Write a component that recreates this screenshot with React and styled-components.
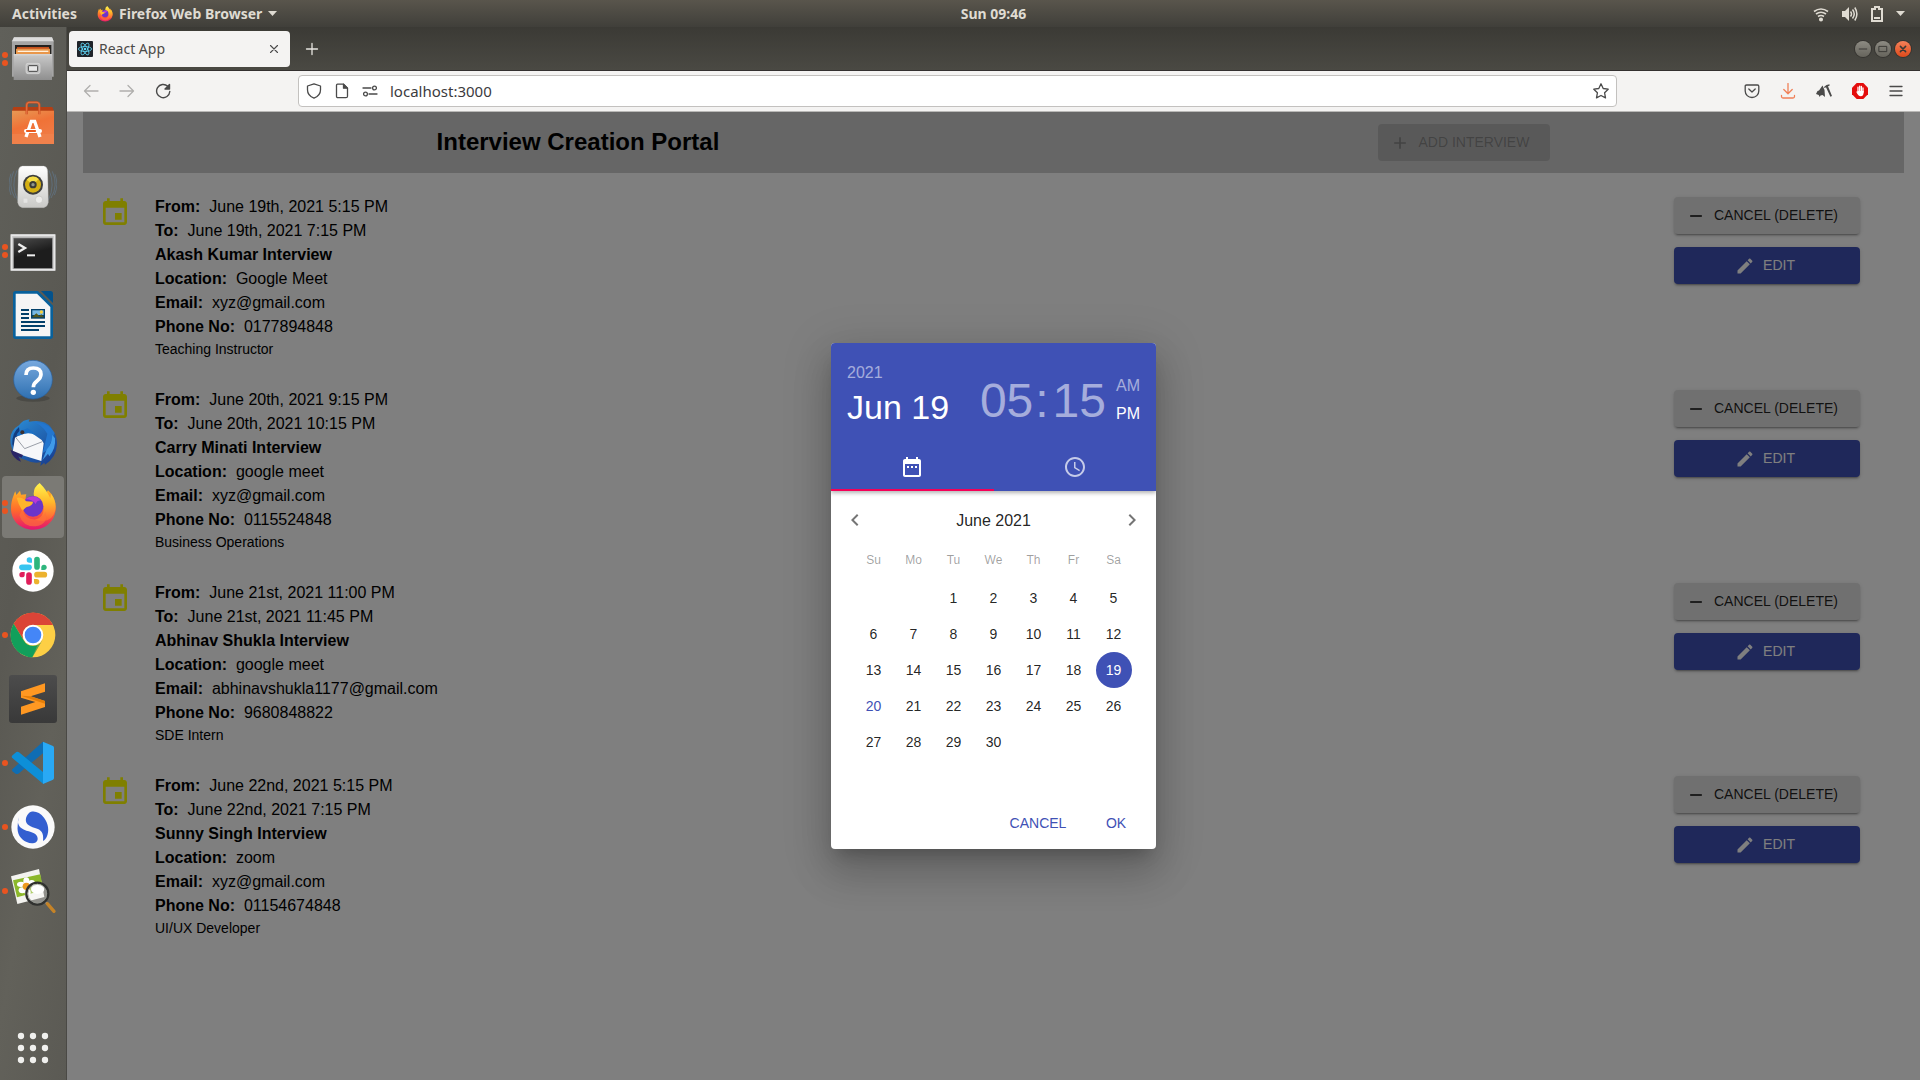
import React from "react";
import styled, { createGlobalStyle } from "styled-components";

const GlobalStyle = createGlobalStyle`
  *, *::before, *::after { box-sizing: border-box; }
  body { margin: 0; font-family: "Liberation Sans", Arial, sans-serif; }
  button, input { font: inherit; margin: 0; }
  h1, h2, p, ul { margin: 0; padding: 0; }
  svg { display: block; flex: none; }
`;

const uiFont = `"Noto Sans", "Open Sans", sans-serif`;

/* ---------- desktop shell ---------- */

const Desktop = styled.div`
  display: flex;
  flex-direction: column;
  min-height: 100vh;
  background: #5d5c56;
`;

const SystemBar = styled.header`
  display: grid;
  grid-template-columns: 70px 1fr auto 1fr;
  align-items: center;
  height: 27px;
  padding: 0 15px 0 12px;
  background: linear-gradient(#59554c, #403f3a);
  color: #dfdbd2;
  font: 700 14px/26px ${uiFont};
`;

const BarGroup = styled.div`
  display: flex;
  align-items: center;
  grid-column: ${(p) => (p.$end ? "4" : "1 / 3")};
  justify-content: ${(p) => (p.$end ? "flex-end" : "flex-start")};
  gap: ${(p) => p.$gap}px;
`;

const BarButton = styled.button`
  display: flex;
  align-items: center;
  gap: 6px;
  padding: 0;
  border: 0;
  background: none;
  color: inherit;
  white-space: nowrap;
`;

const Workspace = styled.div`
  display: flex;
  flex: 1;
`;

const DockBar = styled.nav`
  display: flex;
  flex-direction: column;
  width: 67px;
  flex: none;
  background: linear-gradient(100deg, #60605a, #5a5953 45%, #62615a 70%, #5b5a54);
  border-right: 1px solid #4a4945;
`;

const DockCell = styled.button`
  display: flex;
  align-items: center;
  justify-content: center;
  position: relative;
  height: 62px;
  margin: 1px 2px;
  padding: 0;
  border: 0;
  border-radius: 4px;
  background: ${(p) => (p.$active ? "#7b7a75" : "none")};
  ${(p) => p.$last && "margin-top: auto;"}
`;

const Running = styled.span`
  position: absolute;
  left: 0;
  top: 0;
  bottom: 0;
  display: flex;
  flex-direction: column;
  justify-content: center;
  gap: 2px;
`;

const Dot = styled.i`
  width: 6px;
  height: 6px;
  border-radius: 50%;
  background: #e95420;
`;

/* ---------- browser ---------- */

const BrowserWindow = styled.main`
  display: flex;
  flex-direction: column;
  flex: 1;
  min-width: 0;
`;

const TabStrip = styled.div`
  display: flex;
  align-items: center;
  height: 44px;
  padding: 0 9px 0 2px;
  background: linear-gradient(#3b3a35, #4a4943);
  border-bottom: 1px solid #33302f;
`;

const Tab = styled.div`
  display: flex;
  align-items: center;
  gap: 6px;
  width: 221px;
  height: 36px;
  padding: 0 8px;
  border-radius: 4px;
  background: #f4f3f2;
  color: #4b4a48;
  font: 14px/36px ${uiFont};
`;

const IconButton = styled.button`
  display: flex;
  align-items: center;
  justify-content: center;
  width: ${(p) => p.$size || 36}px;
  height: ${(p) => p.$size || 36}px;
  padding: 0;
  border: 0;
  background: none;
  color: ${(p) => p.$color || "#4a4a4a"};
`;

const TabTitle = styled.span`
  flex: 1;
`;

const WindowControls = styled.div`
  display: flex;
  gap: 4px;
  margin-left: auto;
`;

const WindowButton = styled.button`
  display: flex;
  align-items: center;
  justify-content: center;
  width: 16px;
  height: 16px;
  padding: 0;
  border: 0;
  border-radius: 50%;
  color: #3a3935;
  background: ${(p) => (p.$close ? "linear-gradient(#f58159, #de4a1b)" : "linear-gradient(#8d8b83, #66645c)")};
  box-shadow: 0 0 0 1px rgba(40, 38, 35, 0.5);
`;

const NavBar = styled.div`
  display: flex;
  align-items: center;
  height: 41px;
  padding: 0 6px;
  background: #f4f3f2;
  border-bottom: 1px solid #b9b8b6;
`;

const NavGroup = styled.div`
  display: flex;
  flex: 0 1 ${(p) => p.$basis}px;
  justify-content: ${(p) => (p.$end ? "flex-end" : "flex-start")};
`;

const AddressBar = styled.label`
  display: flex;
  align-items: center;
  flex: 1;
  gap: 12px;
  height: 32px;
  padding: 0 7px;
  border: 1px solid #c3c1bf;
  border-radius: 4px;
  background: #fff;
  color: #4a4a4a;
`;

const AddressInput = styled.input`
  flex: 1;
  min-width: 0;
  padding: 0;
  border: 0;
  outline: 0;
  background: none;
  color: #3b3b40;
  font: 15px/28px ${uiFont};
`;

/* ---------- portal page ---------- */

const Viewport = styled.div`
  position: relative;
  flex: 1;
  background: #fff;
`;

const Portal = styled.div`
  margin: 0 16px;
`;

const PortalHeader = styled.header`
  display: flex;
  align-items: flex-start;
  justify-content: space-around;
  padding: 12px 24px;
  background: #ccc;
`;

const PortalTitle = styled.h1`
  font-size: 24px;
  line-height: 35px;
`;

const buttonLook = {
  plain: "background: #e0e0e0; color: rgba(0,0,0,.87);",
  primary: "background: #3f51b5; color: #fff; justify-content: center;",
  disabled: "background: rgba(0,0,0,.12); color: rgba(0,0,0,.26);",
};

const Contained = styled.button`
  display: flex;
  align-items: center;
  gap: 8px;
  min-width: ${(p) => p.$width}px;
  padding: 6px 16px 6px 12px;
  border: 0;
  border-radius: 4px;
  font-size: 14px;
  line-height: 25px;
  text-transform: uppercase;
  box-shadow: ${(p) =>
    p.disabled ? "none" : "0 3px 1px -2px rgba(0,0,0,.2), 0 2px 2px rgba(0,0,0,.14), 0 1px 5px rgba(0,0,0,.12)"};
  ${(p) => buttonLook[p.$look]}
`;

const InterviewList = styled.ul`
  display: flex;
  flex-direction: column;
  gap: 29px;
  padding: 22px 44px 22px 16px;
  list-style: none;
`;

const InterviewRow = styled.li`
  display: flex;
`;

const RowIcon = styled.div`
  width: 56px;
  padding-top: 2px;
  color: #ff0;
`;

const Details = styled.div`
  flex: 1;
  font-size: 16px;
  line-height: 24px;
`;

const Role = styled.p`
  font-size: 14px;
  line-height: 20px;
`;

const RowActions = styled.div`
  display: flex;
  flex-direction: column;
  gap: 13px;
  padding-top: 2px;
`;

/* ---------- date and time picker ---------- */

const Backdrop = styled.div`
  position: absolute;
  inset: 0;
  display: flex;
  align-items: center;
  justify-content: center;
  background: rgba(0, 0, 0, 0.5);
`;

const Picker = styled.section`
  width: 325px;
  overflow: hidden;
  border-radius: 4px;
  background: #fff;
  color: rgba(0, 0, 0, 0.87);
  box-shadow: 0 11px 15px -7px rgba(0, 0, 0, 0.2), 0 24px 38px 3px rgba(0, 0, 0, 0.14),
    0 9px 46px 8px rgba(0, 0, 0, 0.12);
`;

const PickerTop = styled.div`
  background: #3f51b5;
  box-shadow: 0 2px 4px rgba(0, 0, 0, 0.3);
`;

const Readout = styled.div`
  display: flex;
  align-items: flex-end;
  justify-content: space-between;
  padding: 16px;
`;

const Stack = styled.div`
  display: flex;
  flex-direction: column;
  align-items: flex-start;
`;

const TimeParts = styled.div`
  display: flex;
  align-items: flex-end;
`;

const ReadoutButton = styled.button`
  padding: 0;
  border: 0;
  background: none;
  color: ${(p) => (p.$on ? "#fff" : "rgba(255,255,255,.54)")};
  font-size: ${(p) => p.$size}px;
  line-height: ${(p) => p.$line}px;
`;

const Colon = styled.span`
  margin: 0 4px 0 2px;
  color: rgba(255, 255, 255, 0.54);
  font-size: 48px;
  line-height: 52px;
`;

const Meridiem = styled(Stack)`
  gap: 2px;
  margin-left: 10px;
`;

const PickerTabs = styled.div`
  display: grid;
  grid-template-columns: 1fr 1fr;
`;

const PickerTab = styled.button`
  display: flex;
  align-items: center;
  justify-content: center;
  height: 48px;
  padding: 2px 0 0;
  border: 0;
  border-bottom: 2px solid ${(p) => (p.$on ? "#f50057" : "transparent")};
  background: none;
  color: ${(p) => (p.$on ? "#fff" : "rgba(255,255,255,.7)")};
`;

const Calendar = styled.div`
  min-height: 306px;
`;

const MonthRow = styled.div`
  display: flex;
  align-items: center;
  justify-content: space-between;
  padding-top: 5px;
  margin-bottom: 8px;
`;

const MonthName = styled.h2`
  font-size: 16px;
  font-weight: 400;
  line-height: 22px;
  padding-top: 2px;
`;

const DayGrid = styled.div`
  display: grid;
  grid-template-columns: repeat(7, 40px);
  justify-content: center;
  justify-items: center;
`;

const Weekday = styled.span`
  margin-bottom: 12px;
  color: rgba(0, 0, 0, 0.38);
  font-size: 12px;
  line-height: 16px;
`;

const Day = styled.button`
  width: 36px;
  height: 36px;
  padding: 0;
  border: 0;
  border-radius: 50%;
  background: ${(p) => (p.$selected ? "#3f51b5" : "none")};
  color: ${(p) => (p.$selected ? "#fff" : p.$today ? "#3f51b5" : "rgba(0,0,0,.87)")};
  font-size: 14px;
`;

const PickerActions = styled.div`
  display: flex;
  justify-content: flex-end;
  gap: 8px;
  padding: 8px;
`;

const TextButton = styled.button`
  min-width: ${(p) => p.$width}px;
  height: 36px;
  padding: 0 8px;
  border: 0;
  background: none;
  color: #3f51b5;
  font-size: 14px;
`;

/* ---------- icons ---------- */

const Glyph = ({ size = 24, d, label }) => (
  <svg width={size} height={size} viewBox="0 0 24 24" fill="currentColor" aria-hidden={!label}>
    <path d={d} />
  </svg>
);

const Line = ({ size = 16, children, w = 1.3 }) => (
  <svg width={size} height={size} viewBox="0 0 16 16" fill="none" stroke="currentColor" strokeWidth={w} strokeLinecap="round" strokeLinejoin="round">
    {children}
  </svg>
);

const paths = {
  event: "M17 12h-5v5h5v-5zM16 1v2H8V1H6v2H5c-1.11 0-1.99.9-1.99 2L3 19c0 1.1.89 2 2 2h14c1.1 0 2-.9 2-2V5c0-1.1-.9-2-2-2h-1V1h-2zm3 18H5V8h14v11z",
  add: "M19 13h-6v6h-2v-6H5v-2h6V5h2v6h6v2z",
  remove: "M19 13H5v-2h14v2z",
  edit: "M3 17.25V21h3.75L17.81 9.94l-3.75-3.75L3 17.25zM20.71 7.04c.39-.39.39-1.02 0-1.41l-2.34-2.34c-.39-.39-1.02-.39-1.41 0l-1.83 1.83 3.75 3.75 1.83-1.83z",
  range: "M9 11H7v2h2v-2zm4 0h-2v2h2v-2zm4 0h-2v2h2v-2zm2-7h-1V2h-2v2H8V2H6v2H5c-1.11 0-1.99.9-1.99 2L3 20c0 1.1.89 2 2 2h14c1.1 0 2-.9 2-2V6c0-1.1-.9-2-2-2zm0 16H5V9h14v11z",
  clock: "M11.99 2C6.47 2 2 6.48 2 12s4.47 10 9.99 10C17.52 22 22 17.52 22 12S17.52 2 11.99 2zM12 20c-4.42 0-8-3.58-8-8s3.58-8 8-8 8 3.58 8 8-3.58 8-8 8zm.5-13H11v6l5.25 3.15.75-1.23-4.5-2.67z",
  left: "M15.41 16.59L10.83 12l4.58-4.59L14 6l-6 6 6 6 1.41-1.41z",
  right: "M8.59 16.59L13.17 12 8.59 7.41 10 6l6 6-6 6-1.41-1.41z",
};

const App48 = ({ size = 48, children }) => (
  <svg width={size} height={size} viewBox="0 0 144 144" aria-hidden="true">
    {children}
  </svg>
);

const Gradient = ({ id, from, to, mid, x2 = 0, y2 = 1 }) => (
  <linearGradient id={id} x1="0" y1="0" x2={x2} y2={y2}>
    <stop offset="0" stopColor={from} />
    {mid && <stop offset=".5" stopColor={mid} />}
    <stop offset="1" stopColor={to} />
  </linearGradient>
);

const FilesIcon = () => (
  <App48>
    <Gradient id="fi" from="#c9c9c9" to="#8f8f8f" />
    <path d="M15 7h114l5 12v106H9V19z" fill="#a5a5a5" />
    <path d="M15 7h114l5 12H9z" fill="#dcdcdc" />
    <path d="M18 30h109v28H18z" fill="#24221f" />
    <path d="M24 36h96v20H24z" fill="#c4501c" />
    <path d="M21 41h102v17H21z" fill="#e9974b" />
    <path d="M26 47h92v4H26z" fill="#fff1dc" />
    <path d="M14 58h115v77H14z" fill="url(#fi)" />
    <path d="M14 58h115v3H14z" fill="#ddd" />
    <rect x="51" y="85" width="42" height="31" rx="6" fill="#c4c4c4" stroke="#ddd" strokeWidth="2" />
    <rect x="58" y="92" width="28" height="17" rx="2" fill="#e8e8e8" stroke="#444" strokeWidth="3" />
  </App48>
);

const SoftwareIcon = () => (
  <App48>
    <Gradient id="so" from="#e79a55" mid="#f07237" to="#f07c46" x2={0.4} />
    <path d="M13 24h117l5 12H9z" fill="#b53f14" />
    <path d="M9 35h126v100H9z" fill="url(#so)" />
    <path d="M9 105h126v30H9z" fill="#f08650" opacity=".6" />
    <path d="M53 46V18q0-7 7-8h24q7 1 7 8v28" fill="none" stroke="#cf5322" strokeWidth="7" />
    <path d="M53 46V18q0-7 7-8h24q7 1 7 8v28" fill="none" stroke="#ee8253" strokeWidth="2" />
    <path d="m51 114 16-47h10l16 47" fill="none" stroke="#fff" strokeWidth="10" />
    <rect x="45" y="90" width="54" height="12" rx="6" fill="#fff" />
    <rect x="51" y="93" width="30" height="6" rx="2" fill="#e95a1f" />
  </App48>
);

const RhythmIcon = () => (
  <App48>
    <Gradient id="rh" from="#fff" to="#c9c9c6" />
    <g fill="none" stroke="#6485a6" strokeWidth="3" opacity=".45">
      <path d="M24 22Q4 65 26 112M14 25Q-5 68 18 105M6 32Q-6 65 6 96M120 22q20 43-2 90M130 25q19 43-4 80M138 34q12 32-2 62" />
    </g>
    <path d="M40 9h64q11 2 12 15l2 94q-2 14-14 16H40q-12-2-14-16l2-94Q29 11 40 9z" fill="url(#rh)" stroke="#aaa" strokeWidth="1" />
    <circle cx="72" cy="65" r="30" fill="#3d3e3d" />
    <circle cx="72" cy="65" r="24" fill="#d4af13" />
    <path d="M53 50a24 24 0 0 1 36-2L72 65z" fill="#f4dc47" />
    <circle cx="72" cy="65" r="11" fill="#3a3a37" />
    <circle cx="72" cy="65" r="5" fill="#91968b" />
    <circle cx="90" cy="110" r="11" fill="#ececea" stroke="#c2c2c0" strokeWidth="2" />
    <rect x="43" y="106" width="13" height="14" rx="3" fill="#e4e4e2" stroke="#ccc" />
  </App48>
);

const TerminalIcon = () => (
  <App48>
    <Gradient id="te" from="#4c4c4c" to="#1d1d1d" y2={0.6} x2={0.2} />
    <rect x="4" y="21" width="136" height="111" rx="3" fill="#c9c9c9" />
    <rect x="8" y="25" width="128" height="103" fill="none" stroke="#eee" strokeWidth="3" />
    <rect x="14" y="33" width="116" height="91" fill="url(#te)" stroke="#8b8b8b" strokeWidth="2" />
    <path d="m28 51 20 12-20 12" fill="none" stroke="#eee" strokeWidth="7" />
    <path d="M54 85h24" stroke="#eee" strokeWidth="6" />
  </App48>
);

const WriterIcon = () => (
  <App48>
    <path d="M20 0h67l45 44v92q0 8-8 8H20q-8 0-8-8V8q0-8 8-8z" fill="#08619c" />
    <path d="M96 0h28q8 0 8 8v28z" fill="#03528c" />
    <path d="M20 8h64l40 40v88H20z" fill="#f5f5f5" />
    <path d="M36 57h24M36 69h24M36 81h24M36 93h72M36 105h72M36 117h54" stroke="#02406a" strokeWidth="6" />
    <rect x="66" y="54" width="42" height="29" fill="#02406a" />
    <path d="M70 58h34v14H70z" fill="#77b8e4" />
    <circle cx="97" cy="63" r="5" fill="#f8d23b" />
    <path d="m69 79 13-12 9 8 6-5 8 9z" fill="#52551c" />
  </App48>
);

const HelpIcon = () => (
  <App48>
    <Gradient id="he" from="#78a9de" to="#2e70b1" />
    <ellipse cx="72" cy="130" rx="50" ry="10" fill="#3a3a36" opacity=".5" />
    <circle cx="72" cy="74" r="58" fill="url(#he)" stroke="#2761a0" strokeWidth="2" />
    <path d="M51 60q0-21 22-21 23 0 23 19 0 11-12 20-11 8-11 19" fill="none" stroke="#fff" strokeWidth="11" />
    <circle cx="73" cy="112" r="8" fill="#fff" />
  </App48>
);

const ThunderbirdIcon = () => (
  <App48>
    <Gradient id="th" from="#2b8fd8" to="#194293" x2={0.7} />
    <path d="M30 19Q40 3 62 1q-4 5-2 7 45-9 66 17l4 10q15 13 14 44-3 38-36 58l-2-6-12 10 2-12q-22 6-46-6-36-8-43-40Q-5 38 30 19z" fill="url(#th)" />
    <path d="M30 24q-22 18-20 52l14 28q-4-40 8-64z" fill="#123c7e" />
    <path d="M62 9q30-2 53 35l-14 58 14-8 22-52Q118 6 62 9z" fill="#2376cf" />
    <path d="M18 56 28 50q20-12 40-8l30 21 6 10-7 53L11 100z" fill="#f6f7f9" />
    <path d="m19 54 28 35 53-21" fill="none" stroke="#9a9fa8" strokeWidth="3" />
    <path d="M113 92q16-18 17-44l8 10q3 30-17 54l-4-8-17 20z" fill="#3f9ae8" />
    <path d="M22 50q5-17 22-18l12-4q14 7 24 20-24-12-50 2z" fill="#1b70c5" />
    <circle cx="40" cy="40" r="6" fill="#3a3030" />
    <path d="m4 92 38 16-4 8-10-4 8 16Q12 120 4 92z" fill="#2a2466" />
  </App48>
);

const FirefoxIcon = ({ size }) => (
  <App48 size={size}>
    <Gradient id="ff" from="#ffb525" mid="#ff6a2c" to="#e4156f" />
    <Gradient id="fy" from="#fff44f" mid="#ffb92a" to="#ff5d38" />
    <path d="M14 37q2-8 5-12l3 11 11-13 3 12 16-1q-4 12 0 19l45-3 20-28q23 20 23 53c0 38-30 65-67 65S6 114 6 77c0-17 3-27 8-40z" fill="url(#ff)" />
    <path d="M92 0q-18 12-18 32 0 10 10 17 20 12 20 30 0 25-26 31 50 14 60-25 7-28-12-52l-2 13Q113 21 92 0z" fill="url(#fy)" />
    <circle cx="72" cy="70" r="31" fill="#6b35c9" />
    <path d="M49 49q25-20 47 4-12-2-16 10-8-14-31-14z" fill="#b938d5" />
    <path d="M23 44q17-3 29 11l20 1q0 11-19 16-6 3-12 12-12-16-18-40z" fill="#ffb52b" />
    <path d="M40 78q8 34 43 31 23-3 26-24 11 40-30 45-37 2-48-33z" fill="#ff7139" opacity=".65" />
  </App48>
);

const SlackIcon = () => (
  <App48>
    <circle cx="72" cy="72" r="62" fill="#fff" />
    <g strokeWidth="17" strokeLinecap="round">
      <path d="M39 61h21" stroke="#36c5f0" /><path d="M84 38v22" stroke="#2eb67d" />
      <path d="M84 83h22" stroke="#ecb22e" /><path d="M60 84v21" stroke="#e01e5a" />
    </g>
    <path d="M69 47V39a8 8 0 1 0-8 8z" fill="#36c5f0" />
    <path d="M97 69h8a8 8 0 1 0-8-8z" fill="#2eb67d" />
    <path d="M75 96v8a8 8 0 1 0 8-8z" fill="#ecb22e" />
    <path d="M47 75h-8a8 8 0 1 0 8 8z" fill="#e01e5a" />
  </App48>
);

const ChromeIcon = () => (
  <App48>
    <circle cx="72" cy="72" r="67" fill="#fdcf45" />
    <path d="M14 38a67 67 0 0 1 118 4H72a32 32 0 0 0-28 46z" fill="#db4437" />
    <path d="M14 38a67 67 0 0 0 56 101l30-51a32 32 0 0 1-56 0z" fill="#119f5b" />
    <path d="m70 139 30-51q6-12 2-24z" fill="#e9a933" opacity=".4" />
    <circle cx="72" cy="72" r="31" fill="#fff" />
    <circle cx="72" cy="72" r="25" fill="#4486f7" />
  </App48>
);

const SublimeIcon = () => (
  <App48>
    <Gradient id="su" from="#4c4c4c" to="#393939" />
    <rect width="144" height="144" rx="9" fill="url(#su)" />
    <path d="M36 49 108 25v25L65 64l43 14v18l-72 23V95l43-14-43-13z" fill="#ff9822" />
    <path d="m65 64 43 14v8L36 62z" fill="#e57e08" />
  </App48>
);

const CodeIcon = () => (
  <App48>
    <path d="m9 92 14 12q3 2 7-1l73-62V8z" fill="#0f6fb5" />
    <path d="M9 92 102 8v34L24 104q-3 2-6-1L10 97z" fill="#0f6db3" />
    <path d="M9 50 22 39q4-2 8 1l73 60v35L10 57q-3-3-1-7z" fill="#0d8fd8" />
    <path d="m102 8 30 13q3 2 3 6v89q0 4-3 6l-30 13z" fill="#29a9f5" />
  </App48>
);

const SimplenoteIcon = () => (
  <App48>
    <circle cx="72" cy="72" r="65" fill="#fafafa" />
    <path d="M60 30c12-9 32-3 45 14s17 40 8 58c-5 9-11 12-11 12 3-24-5-34-24-39-21-5-30-15-27-29 2-9 9-16 9-16z" fill="#335fd0" />
    <path d="M29 43c-6 18 0 33 23 40 20 5 34 9 34 24 0 14-18 17-33 10-18-8-30-25-27-49 1-11 3-25 3-25z" fill="#335fd0" />
  </App48>
);

const ViewerIcon = () => (
  <App48>
    <path d="m6 28 84-22 16 84-81 21z" fill="#f3f3ef" />
    <path d="m12 40 82-18 9 48-79 21z" fill="#8cb82b" />
    <g fill="#fff">
      <ellipse cx="52" cy="42" rx="9" ry="11" /><ellipse cx="36" cy="52" rx="12" ry="8" /><ellipse cx="40" cy="70" rx="11" ry="9" />
      <ellipse cx="56" cy="76" rx="9" ry="10" /><ellipse cx="68" cy="48" rx="10" ry="9" /><ellipse cx="86" cy="66" rx="20" ry="15" />
    </g>
    <circle cx="52" cy="58" r="11" fill="#ed9a1f" />
    <path d="m108 104 12 10" stroke="#999" strokeWidth="6" />
    <path d="m115 110 20 23" stroke="#c58327" strokeWidth="10" strokeLinecap="round" />
    <circle cx="85" cy="80" r="33" fill="#fff" fillOpacity=".3" stroke="#30312f" strokeWidth="7" />
    <circle cx="85" cy="80" r="28" fill="none" stroke="#92958f" strokeWidth="2" />
  </App48>
);

const GridIcon = () => (
  <App48>
    {[36, 72, 108].map((y) => [36, 72, 108].map((x) => <circle key={x + "-" + y} cx={x} cy={y} r="9.5" fill="#f0f0ee" />))}
  </App48>
);

const ReactMark = () => (
  <svg width="16" height="16" viewBox="0 0 16 16" fill="none" stroke="#61dafb">
    <rect width="16" height="16" rx="1" fill="#1f2329" stroke="none" />
    {[0, 60, 120].map((a) => (
      <ellipse key={a} cx="8" cy="8" rx="6.6" ry="2.5" strokeWidth=".8" transform={`rotate(${a} 8 8)`} />
    ))}
    <circle cx="8" cy="8" r="1.3" fill="#61dafb" stroke="none" />
  </svg>
);

const Caret = () => (
  <svg width="9" height="5" viewBox="0 0 9 5" fill="currentColor"><path d="M0 0h9L4.500 5z" /></svg>
);

/* ---------- content ---------- */

const dockItems = [
  ["Files", FilesIcon, 2],
  ["Ubuntu Software", SoftwareIcon, 0],
  ["Rhythmbox", RhythmIcon, 0],
  ["Terminal", TerminalIcon, 2],
  ["LibreOffice Writer", WriterIcon, 0],
  ["Help", HelpIcon, 0],
  ["Thunderbird", ThunderbirdIcon, 0],
  ["Firefox", FirefoxIcon, 2, true],
  ["Slack", SlackIcon, 0],
  ["Chrome", ChromeIcon, 1],
  ["Sublime Text", SublimeIcon, 0],
  ["Visual Studio Code", CodeIcon, 1],
  ["Simplenote", SimplenoteIcon, 1],
  ["Image Viewer", ViewerIcon, 1],
];

const interviews = [
  { from: "June 19th, 2021 5:15 PM", to: "June 19th, 2021 7:15 PM", name: "Akash Kumar", place: "Google Meet", email: "xyz@gmail.com", phone: "0177894848", role: "Teaching Instructor" },
  { from: "June 20th, 2021 9:15 PM", to: "June 20th, 2021 10:15 PM", name: "Carry Minati", place: "google meet", email: "xyz@gmail.com", phone: "0115524848", role: "Business Operations" },
  { from: "June 21st, 2021 11:00 PM", to: "June 21st, 2021 11:45 PM", name: "Abhinav Shukla", place: "google meet", email: "abhinavshukla1177@gmail.com", phone: "9680848822", role: "SDE Intern" },
  { from: "June 22nd, 2021 5:15 PM", to: "June 22nd, 2021 7:15 PM", name: "Sunny Singh", place: "zoom", email: "xyz@gmail.com", phone: "01154674848", role: "UI/UX Developer" },
];

const Field = ({ label, value }) => (
  <p>
    <b>{label}:{"\u00a0"}</b> {value}
  </p>
);

function Interview({ item }) {
  return (
    <InterviewRow>
      <RowIcon><Glyph size={32} d={paths.event} /></RowIcon>
      <Details>
        <Field label="From" value={item.from} />
        <Field label="To" value={item.to} />
        <p><b>{item.name} Interview</b></p>
        <Field label="Location" value={item.place} />
        <Field label="Email" value={item.email} />
        <Field label="Phone No" value={item.phone} />
        <Role>{item.role}</Role>
      </Details>
      <RowActions>
        <Contained $look="plain" $width={186}><Glyph size={20} d={paths.remove} />Cancel (Delete)</Contained>
        <Contained $look="primary" $width={186}><Glyph size={20} d={paths.edit} />Edit</Contained>
      </RowActions>
    </InterviewRow>
  );
}

function DateTimePicker() {
  return (
    <Picker role="dialog" aria-label="Choose date and time">
      <PickerTop>
        <Readout>
          <Stack>
            <ReadoutButton $size={16} $line={28}>2021</ReadoutButton>
            <ReadoutButton $size={34} $line={40} $on>Jun 19</ReadoutButton>
          </Stack>
          <TimeParts>
            <ReadoutButton $size={48} $line={52}>05</ReadoutButton>
            <Colon>:</Colon>
            <ReadoutButton $size={48} $line={52}>15</ReadoutButton>
            <Meridiem>
              <ReadoutButton $size={16} $line={26}>AM</ReadoutButton>
              <ReadoutButton $size={16} $line={26} $on>PM</ReadoutButton>
            </Meridiem>
          </TimeParts>
        </Readout>
        <PickerTabs>
          <PickerTab $on aria-label="Date"><Glyph d={paths.range} /></PickerTab>
          <PickerTab aria-label="Time"><Glyph d={paths.clock} /></PickerTab>
        </PickerTabs>
      </PickerTop>
      <Calendar>
        <MonthRow>
          <IconButton $size={48} $color="#757575" aria-label="Previous month"><Glyph d={paths.left} /></IconButton>
          <MonthName>June 2021</MonthName>
          <IconButton $size={48} $color="#757575" aria-label="Next month"><Glyph d={paths.right} /></IconButton>
        </MonthRow>
        <DayGrid>
          {["Su", "Mo", "Tu", "We", "Th", "Fr", "Sa"].map((d) => <Weekday key={d}>{d}</Weekday>)}
          <span /><span />
          {Array.from({ length: 30 }, (_, i) => (
            <Day key={i} $selected={i === 18} $today={i === 19}>{i + 1}</Day>
          ))}
        </DayGrid>
      </Calendar>
      <PickerActions>
        <TextButton $width={76}>CANCEL</TextButton>
        <TextButton $width={64}>OK</TextButton>
      </PickerActions>
    </Picker>
  );
}

export default function App() {
  return (
    <Desktop>
      <GlobalStyle />
      <SystemBar>
        <BarGroup $gap={20}>
          <BarButton>Activities</BarButton>
          <BarButton><FirefoxIcon size={16} />Firefox Web Browser<Caret /></BarButton>
        </BarGroup>
        <BarButton>Sun 09:46</BarButton>
        <BarGroup $gap={13} $end>
          <svg width="16" height="16" viewBox="0 0 16 16" fill="none" stroke="currentColor" strokeWidth="1.7">
            <path d="M1 5.500Q8 .5 15 5.500M3 8q5-3.500 10 0M5 10.500q3-2 6 0" /><circle cx="8" cy="13.500" r="1.200" fill="currentColor" />
          </svg>
          <svg width="16" height="16" viewBox="0 0 16 16" fill="none" stroke="currentColor" strokeWidth="1.500">
            <path d="M0 5h3l4-4v14l-4-4H0z" fill="currentColor" stroke="none" /><path d="M8.500 5.500q2 2.500 0 5M10.500 3.500q3.500 4.500 0 9M12.800 1.500q4.200 6.500 0 13" />
          </svg>
          <svg width="12" height="16" viewBox="0 0 12 16" fill="none" stroke="currentColor" strokeWidth="2">
            <path d="M1 3h3V1h4v2h3v12H1zM3 12h6" />
          </svg>
          <Caret />
        </BarGroup>
      </SystemBar>
      <Workspace>
        <DockBar aria-label="Dock">
          {dockItems.map(([name, Icon, count, active]) => (
            <DockCell key={name} aria-label={name} $active={active}>
              <Running>{Array.from({ length: count }, (_, i) => <Dot key={i} />)}</Running>
              <Icon />
            </DockCell>
          ))}
          <DockCell aria-label="Show applications" $last><GridIcon /></DockCell>
        </DockBar>
        <BrowserWindow>
          <TabStrip>
            <Tab>
              <ReactMark />
              <TabTitle>React App</TabTitle>
              <IconButton $size={16} aria-label="Close tab"><Line w={1.1}><path d="m4.500 4.500 7 7m0-7-7 7" /></Line></IconButton>
            </Tab>
            <IconButton $size={44} $color="#e8e6e1" aria-label="New tab"><Line><path d="M8 2.500v11M2.500 8h11" /></Line></IconButton>
            <WindowControls>
              <WindowButton aria-label="Minimise"><Line size={12}><path d="M3 8h10" /></Line></WindowButton>
              <WindowButton aria-label="Maximise"><Line size={12}><path d="M3 4.500h10v7H3z" /></Line></WindowButton>
              <WindowButton $close aria-label="Close"><Line size={12} w={2}><path d="m4.500 4.500 7 7m0-7-7 7" /></Line></WindowButton>
            </WindowControls>
          </TabStrip>
          <NavBar>
            <NavGroup $basis={225}>
              <IconButton $color="#b0afad" aria-label="Back"><Line><path d="M15 8H1.500m5.500-5.500L1.500 8 7 13.500" /></Line></IconButton>
              <IconButton $color="#b0afad" aria-label="Forward"><Line><path d="M1 8h13.500M9 2.500 14.500 8 9 13.500" /></Line></IconButton>
              <IconButton aria-label="Reload"><Line w={1.4}><path d="M14.800 8.500A6.600 6.600 0 1 1 12.800 3.300" /><path d="M14.500 1.500v4.500H10z" fill="currentColor" /></Line></IconButton>
            </NavGroup>
            <AddressBar>
              <Line><path d="M8 .8 14.500 3v4q0 5.500-6.500 8.200Q1.500 12.500 1.500 7V3z" /></Line>
              <Line><path d="M3.500 1.200h6l4 4v8q0 1.500-1.500 1.500H4q-1.500 0-1.500-1.500v-11q0-1 1-1z" /><path d="M9.500 1.200v4h4z" fill="currentColor" /></Line>
              <Line><path d="M1 5h8M7 11h8" /><circle cx="12.500" cy="5" r="1.900" /><circle cx="3.500" cy="11" r="1.900" /></Line>
              <AddressInput aria-label="Address" defaultValue="localhost:3000" />
              <Line><path d="m8 .8 2.200 4.700 5 .7-3.600 3.600.9 5.100L8 12.500l-4.500 2.400.9-5.100L.8 6.200l5-.7z" /></Line>
            </AddressBar>
            <NavGroup $basis={297} $end>
              <IconButton aria-label="Pocket"><Line><path d="M2.500 2h11q1.300 0 1.300 1.300V8A6.800 6.500 0 0 1 1.200 8V3.300Q1.200 2 2.500 2z" /><path d="m4.800 6 3.200 3 3.200-3" /></Line></IconButton>
              <IconButton $color="#f08058" aria-label="Downloads"><Line><path d="M8 .5v10M3.800 6.500 8 10.700l4.200-4.200M1.500 12.500v1q0 1.500 1.500 1.500h10q1.500 0 1.500-1.500v-1" /></Line></IconButton>
              <IconButton aria-label="Extension"><svg width="16" height="16" viewBox="0 0 16 16" fill="currentColor"><path d="M0 11 1.500 8 3 7.500 6.500 2.500 8.500 7l.5 7-2.500-2-2 .5-.8 1.500-1-2zM8 4l2.500-2 3-.8v1.500l-1.500.6 4 9.700-1.600.8-4.400-9.500L8.500 5z" /></svg></IconButton>
              <IconButton aria-label="Ad blocker">
                <svg width="16" height="16" viewBox="0 0 16 16"><path d="M4.700 0h6.600L16 4.700v6.600L11.300 16H4.700L0 11.300V4.700z" fill="#e40d0d" /><path d="M6 9V4.200m1.700 4.800V3.200m1.700 5.800V3.500M11 9V5" stroke="#fff" strokeWidth="1.300" strokeLinecap="round" /><path d="M5.300 8h6.400q.3 5.300-3 5.300-2.300 0-4.500-4.600.8-.8 1.800.8z" fill="#fff" /></svg>
              </IconButton>
              <IconButton aria-label="Menu"><Line><path d="M2 3.500h12M2 8h12M2 12.500h12" /></Line></IconButton>
            </NavGroup>
          </NavBar>
          <Viewport>
            <Portal>
              <PortalHeader>
                <PortalTitle>Interview Creation Portal</PortalTitle>
                <Contained $look="disabled" $width={172} disabled><Glyph size={20} d={paths.add} />Add Interview</Contained>
              </PortalHeader>
              <InterviewList>
                {interviews.map((item) => <Interview key={item.name} item={item} />)}
              </InterviewList>
            </Portal>
            <Backdrop><DateTimePicker /></Backdrop>
          </Viewport>
        </BrowserWindow>
      </Workspace>
    </Desktop>
  );
}
